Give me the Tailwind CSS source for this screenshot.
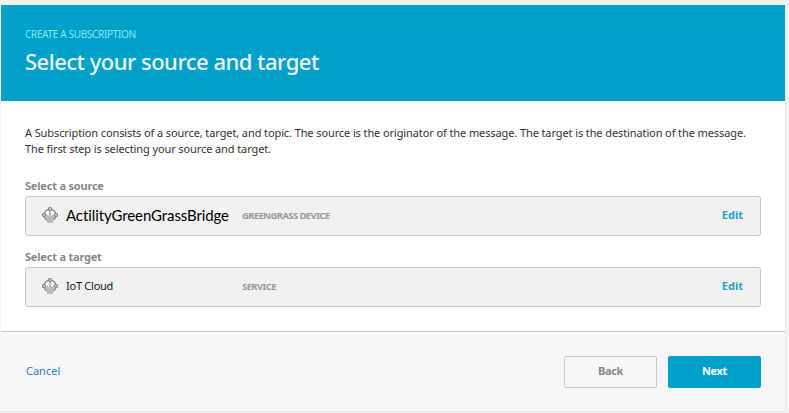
<!DOCTYPE html>
<html lang="en">
<head>
<meta charset="utf-8">
<title>Create a subscription</title>
<script src="https://cdn.jsdelivr.net/npm/@tailwindcss/browser@4"></script>
</head>
<body class="h-[413px] overflow-hidden bg-[#f2f3f3] pt-[5px] pl-px font-['Noto_Sans',sans-serif] text-[11px] leading-4 whitespace-nowrap">
<svg class="hidden">
  <symbol id="device" viewBox="0 0 16 16">
    <circle cx="8" cy="8" r="5.900" fill="none" stroke="#8b8b8b" stroke-width="1.300"/>
    <path d="M4 8H6V9H7V4H9V9H10V8H12V12L11 13.500V16H5V13.500L4 12z" fill="#bbb"/>
    <g fill="#e9f3ef" stroke="#64766f" stroke-width="1.100">
      <circle cx="8" cy="2" r="1.450"/><circle cx="2" cy="8" r="1.450"/><circle cx="14" cy="8" r="1.450"/>
    </g>
  </symbol>
</svg>
<main class="flex h-[407px] w-[785px] flex-col border-r border-b border-[#e6e8e8] bg-white">
  <header class="h-24 w-[784px] shrink-0 bg-[#00a1c9] pt-[21px] pl-6">
    <p class="text-[10px] tracking-[-0.33px] text-[#84eafa]">CREATE A SUBSCRIPTION</p>
    <h1 class="mt-[3px] text-[22px] leading-8 font-medium tracking-[-0.51px] text-[#f2f3f3]">Select your source and target</h1>
  </header>
  <section class="h-[230px] shrink-0 px-6 pt-6 text-[#333]">
    <p class="tracking-[-0.103px]">A Subscription consists of a source, target, and topic. The source is the originator of the message. The target is the destination of the message.<br>The first step is selecting your source and target.</p>
    <h2 class="mt-[21px] font-bold tracking-[-0.2px] text-[#888]">Select a source</h2>
    <div class="mt-[2px] flex h-10 w-[736px] items-center rounded-[3px] border border-[#c9c9c9] bg-[#f1f1f1] pr-[17px] pb-[2px] pl-4">
      <svg class="mr-2 h-4 w-4"><use href="#device"/></svg>
      <span class="w-44 font-[Lato,sans-serif] text-[15px] tracking-[-0.1px] text-black">ActilityGreenGrassBridge</span>
      <span class="pt-px text-[9.5px] font-bold tracking-[-0.6px] text-[#999]">GREENGRASS DEVICE</span>
      <a class="ml-auto font-bold text-[#23a3cc]">Edit</a>
    </div>
    <h2 class="mt-[13px] font-bold tracking-[-0.2px] text-[#888]">Select a target</h2>
    <div class="mt-[2px] flex h-10 w-[736px] items-center rounded-[3px] border border-[#c9c9c9] bg-[#f1f1f1] pr-[17px] pb-[2px] pl-4">
      <svg class="mr-2 h-4 w-4"><use href="#device"/></svg>
      <span class="w-44 tracking-[-0.25px] text-[#16191f]">IoT Cloud</span>
      <span class="pt-px text-[9.5px] font-bold tracking-[-0.6px] text-[#999]">SERVICE</span>
      <a class="ml-auto font-bold text-[#23a3cc]">Edit</a>
    </div>
  </section>
  <footer class="flex flex-1 items-center border-t border-[#c9cbcb] bg-[#f7f7f7] pr-6 pl-[25px]">
    <a class="pb-[2px] text-[#337ab7]">Cancel</a>
    <button class="ml-auto h-8 w-[93px] rounded-[2px] border border-[#c9c9c9] pb-[2px] font-bold tracking-[-0.3px] text-[#888]">Back</button>
    <button class="ml-[11px] h-8 w-[93px] rounded-[2px] bg-[#00a1c9] pb-[2px] font-bold tracking-[-0.3px] text-white">Next</button>
  </footer>
</main>
</body>
</html>
